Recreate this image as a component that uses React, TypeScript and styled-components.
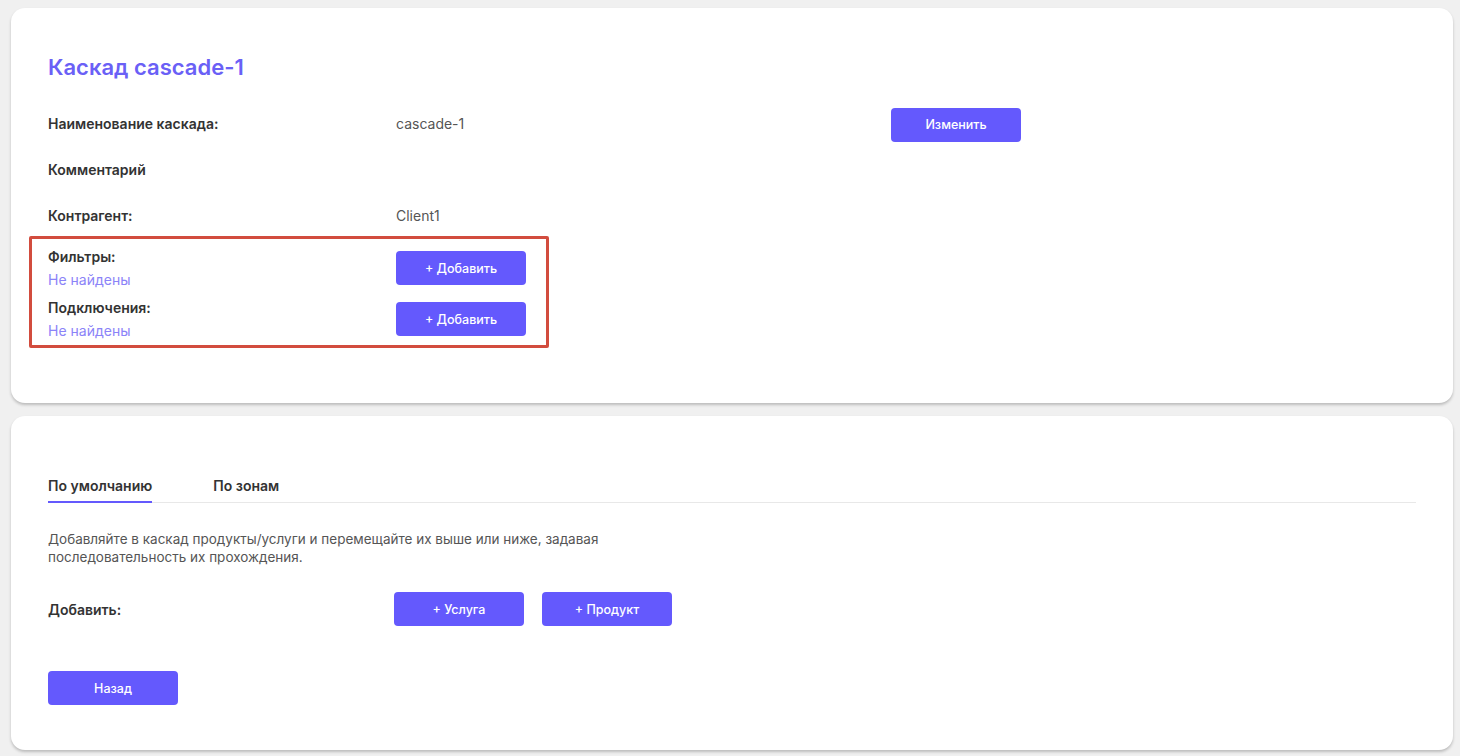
import React from "react";
import styled, { createGlobalStyle } from "styled-components";

const GlobalStyle = createGlobalStyle`
    html, body {
        margin: 0;
        padding: 0;
        background: #f0f0f0;
        font-family: "Inter", "Noto Sans", sans-serif;
        color: #333333;
    }
`;

const Page = styled.div`
    display: flex;
    flex-direction: column;
    gap: 13px;
    padding: 8px 7px 6px 11px;
`;

const Card = styled.section<{ $height: number }>`
    background: #ffffff;
    border-radius: 14px;
    box-shadow: 0px 2px 3px rgba(0, 0, 0, 0.22);
    height: ${props => props.$height}px;
    box-sizing: border-box;
    padding: 0 37px;
    display: flex;
    flex-direction: column;
`;

const Title = styled.h1`
    margin: 45px 0 19px 0;
    font-size: 22px;
    line-height: 28px;
    font-weight: 600;
    color: #6a60f6;
`;

const InfoRow = styled.div<{ $height: number }>`
    display: grid;
    grid-template-columns: 348px 495px 130px;
    align-items: center;
    height: ${props => props.$height}px;
`;

const Label = styled.span`
    font-size: 14px;
    font-weight: 600;
    color: #333333;
`;

const Value = styled.span`
    font-size: 14px;
    font-weight: 400;
    color: #555555;
`;

const Button = styled.button<{ $offset?: number }>`
    width: 130px;
    height: 34px;
    margin-top: ${props => props.$offset ?? 0}px;
    border: none;
    border-radius: 4px;
    background: #6459fd;
    color: #ffffff;
    font-family: inherit;
    font-size: 12.5px;
    font-weight: 500;
    cursor: pointer;
    padding: 0;
`;

const Highlight = styled.div`
    width: 520px;
    box-sizing: border-box;
    margin-left: -19px;
    margin-top: -2px;
    border: 3px solid #d24c3e;
    border-radius: 2px;
    padding: 9px 20px 12px 16px;
    display: flex;
    flex-direction: column;
    gap: 17px;
`;

const ListRow = styled.div`
    display: grid;
    grid-template-columns: 348px 130px;
    align-items: center;
    height: 34px;
`;

const ListInfo = styled.div`
    display: flex;
    flex-direction: column;
    gap: 6px;
`;

const Empty = styled.span`
    font-size: 14px;
    color: #8b83f8;
`;

const Tabs = styled.div`
    display: flex;
    gap: 61px;
    margin-top: 61px;
    border-bottom: 1px solid #e8e8e8;
`;

const Tab = styled.div<{ $active?: boolean }>`
    font-size: 14px;
    font-weight: 600;
    color: #333333;
    padding-bottom: 7px;
    border-bottom: 2px solid ${props => (props.$active ? "#6459fd" : "transparent")};
    margin-bottom: -1px;
`;

const Description = styled.p`
    margin: 27px 0 0 0;
    width: 620px;
    font-size: 13.5px;
    line-height: 18px;
    color: #555555;
`;

const AddRow = styled.div`
    display: flex;
    align-items: center;
    margin-top: 26px;
`;

const AddLabel = styled(Label)`
    width: 346px;
`;

const ButtonGroup = styled.div`
    display: flex;
    gap: 18px;
`;

const Footer = styled.div`
    margin-top: 45px;
`;

const App: React.FC = (): React.ReactElement => {
    return (
        <>
            <GlobalStyle />
            <Page>
                <Card $height={395}>
                    <Title>Каскад cascade-1</Title>
                    <InfoRow $height={46}>
                        <Label>Наименование каскада:</Label>
                        <Value>cascade-1</Value>
                        <Button $offset={3}>Изменить</Button>
                    </InfoRow>
                    <InfoRow $height={46}>
                        <Label>Комментарий</Label>
                    </InfoRow>
                    <InfoRow $height={46}>
                        <Label>Контрагент:</Label>
                        <Value>Client1</Value>
                    </InfoRow>
                    <Highlight>
                        <ListRow>
                            <ListInfo>
                                <Label>Фильтры:</Label>
                                <Empty>Не найдены</Empty>
                            </ListInfo>
                            <Button>+ Добавить</Button>
                        </ListRow>
                        <ListRow>
                            <ListInfo>
                                <Label>Подключения:</Label>
                                <Empty>Не найдены</Empty>
                            </ListInfo>
                            <Button>+ Добавить</Button>
                        </ListRow>
                    </Highlight>
                </Card>
                <Card $height={334}>
                    <Tabs>
                        <Tab $active>По умолчанию</Tab>
                        <Tab>По зонам</Tab>
                    </Tabs>
                    <Description>
                        Добавляйте в каскад продукты/услуги и перемещайте их выше или ниже, задавая
                        последовательность их прохождения.
                    </Description>
                    <AddRow>
                        <AddLabel>Добавить:</AddLabel>
                        <ButtonGroup>
                            <Button>+ Услуга</Button>
                            <Button>+ Продукт</Button>
                        </ButtonGroup>
                    </AddRow>
                    <Footer>
                        <Button>Назад</Button>
                    </Footer>
                </Card>
            </Page>
        </>
    );
};

export default App;
